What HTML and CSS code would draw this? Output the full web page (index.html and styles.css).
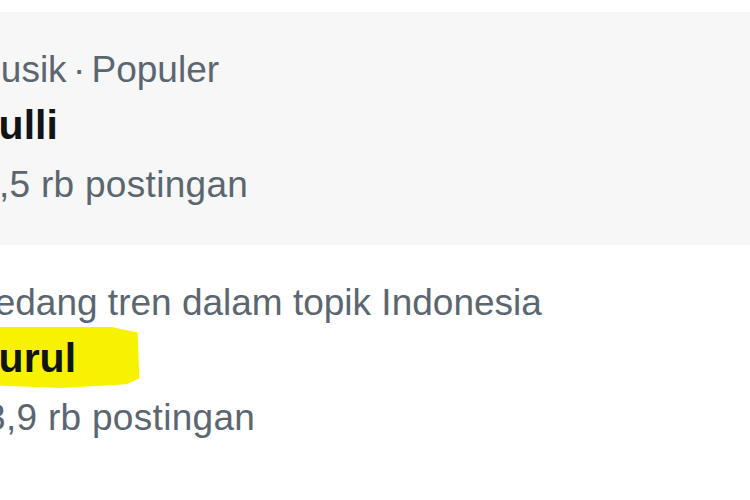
FILE: index.html
```html
<!DOCTYPE html>
<html lang="id">
<head>
<meta charset="utf-8">
<title>Trends</title>
<link rel="stylesheet" href="styles.css">
</head>
<body>
<div class="list">
  <div class="trend hover">
    <div class="meta">Musik<span class="dot"> · </span>Populer</div>
    <div class="name">Bulli</div>
    <div class="count">1,5 rb postingan</div>
  </div>
  <div class="trend">
    <div class="meta">Sedang tren dalam topik Indonesia</div>
    <div class="name"><span class="mark">Nurul</span></div>
    <div class="count count-b">3,9 rb postingan</div>
  </div>
</div>
</body>
</html>
```

FILE: styles.css
```css
html, body {
  margin: 0;
  padding: 0;
  background: #ffffff;
  overflow: hidden;
}
body {
  width: 750px;
  height: 500px;
  font-family: "Liberation Sans", Arial, sans-serif;
}
.list {
  padding-top: 12px;
}
.trend {
  padding: 35px 0 38px 0;
}
.hover {
  background: #f7f7f7;
}
.meta, .count {
  font-size: 37px;
  line-height: 45px;
  color: #5b6670;
  white-space: nowrap;
  margin-left: -30px;
}
.dot {
  word-spacing: -4px;
}
.name {
  margin-left: -31px;
  padding-top: 5px;
  font-size: 41px;
  line-height: 56px;
  font-weight: 700;
  color: #111417;
  white-space: nowrap;
}
.count {
  padding-top: 9px;
  margin-left: -22px;
  letter-spacing: 0.3px;
}
.count-b {
  margin-left: -15px;
}
.mark {
  position: relative;
  z-index: 0;
}
.mark::before {
  content: "";
  position: absolute;
  left: -10px;
  top: -8px;
  width: 186px;
  height: 61px;
  background: #f7f300;
  z-index: -1;
  clip-path: polygon(0 0, 82% 0, 96% 9%, 97% 84%, 90% 94%, 55% 100%, 30% 97%, 0 95%);
}
```
